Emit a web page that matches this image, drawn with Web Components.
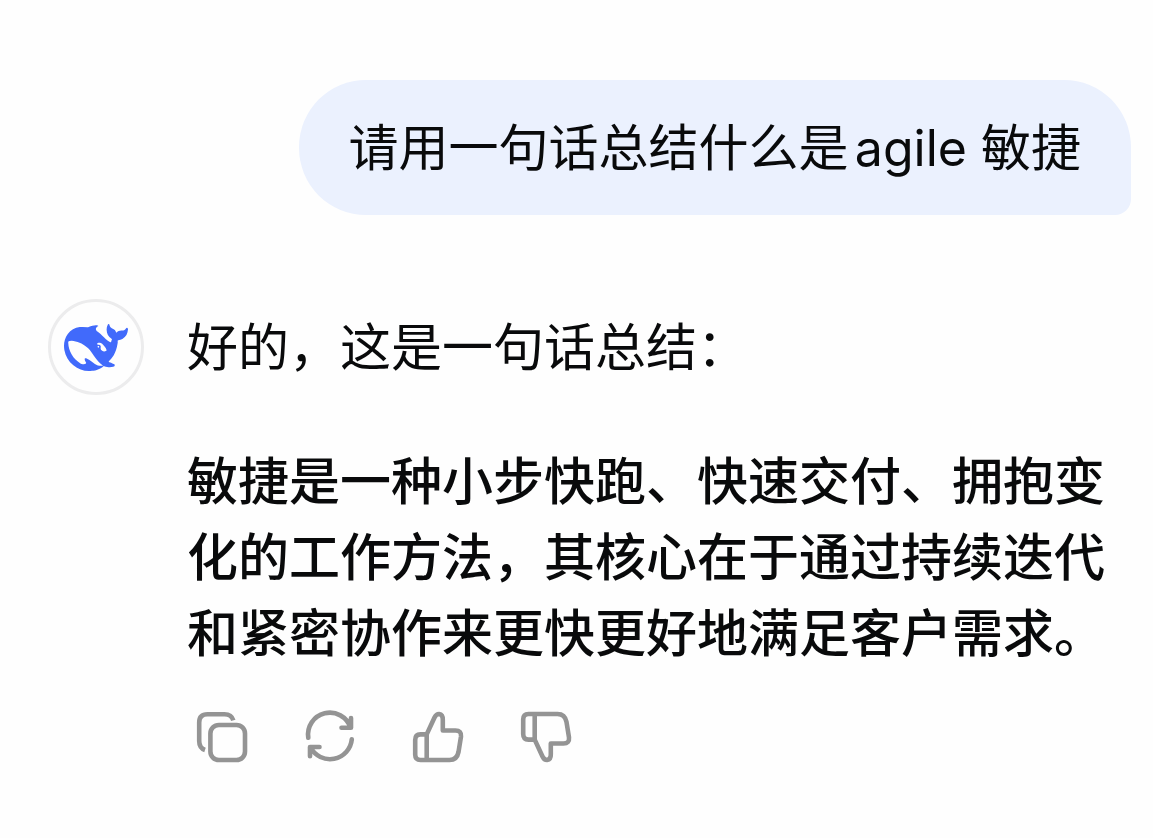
<!DOCTYPE html>
<html lang="zh-CN">
<head>
<meta charset="utf-8">
<meta name="viewport" content="width=device-width, initial-scale=1">
<title>敏捷</title>
<style>
  body {
    margin: 0;
    background-color: #fefefe;
    color: #090a0b;
    font-family: Inter, "Noto Sans CJK SC", sans-serif;
  }
</style>
</head>
<body>
<chat-thread>
  <user-message>请用一句话总结什么是agile 敏捷</user-message>
  <bot-message>
    <p>好的，这是一句话总结：</p>
    <p><strong>敏捷是一种小步快跑、快速交付、拥抱变化的工作方法，其核心在于通过持续迭代和紧密协作来更快更好地满足客户需求。</strong></p>
    <message-actions slot="actions"></message-actions>
  </bot-message>
</chat-thread>

<script>
class ChatThread extends HTMLElement {
  constructor() {
    super();
    this.attachShadow({ mode: 'open' }).innerHTML = `
      <style>
        :host {
          display: flex;
          flex-direction: column;
          gap: 84px;
          padding: 80px 22px 48px 48px;
          box-sizing: border-box;
        }
      </style>
      <slot></slot>
    `;
  }
}

class UserMessage extends HTMLElement {
  constructor() {
    super();
    this.attachShadow({ mode: 'open' }).innerHTML = `
      <style>
        :host {
          display: block;
          align-self: flex-end;
          padding: 30px 50px 29px;
          border-radius: 67px 67px 16px 67px;
          background-color: #ebf1fe;
          font-size: 50px;
          line-height: 76px;
          text-autospace: normal;
        }
      </style>
      <slot></slot>
    `;
  }
}

class BotAvatar extends HTMLElement {
  constructor() {
    super();
    this.attachShadow({ mode: 'open' }).innerHTML = `
      <style>
        :host {
          display: flex;
          flex: none;
          align-items: center;
          justify-content: center;
          width: 96px;
          height: 96px;
          padding-top: 2px;
          border: 3px solid #ececed;
          border-radius: 50%;
          box-sizing: border-box;
        }

        svg {
          width: 64px;
          height: 64px;
          fill: #416afb;
        }
      </style>
      <svg viewBox="0 0 24 24" aria-hidden="true">
        <path d="M23.748 4.482c-.254-.124-.364.113-.512.234-.051.039-.094.09-.137.136-.372.397-.806.657-1.373.626-.829-.046-1.537.214-2.163.848-.133-.782-.575-1.248-1.247-1.548-.352-.156-.708-.311-.955-.65-.172-.241-.219-.51-.305-.774-.055-.16-.11-.323-.293-.35-.2-.031-.278.136-.356.276-.313.572-.434 1.202-.422 1.84.027 1.436.633 2.58 1.838 3.393.137.093.172.187.129.323-.082.28-.18.552-.266.833-.055.179-.137.217-.329.14a5.526 5.526 0 0 1-1.736-1.18c-.857-.828-1.631-1.742-2.597-2.458a11.365 11.365 0 0 0-.689-.471c-.985-.957.13-1.743.388-1.836.27-.098.093-.432-.779-.428-.872.004-1.67.295-2.687.684a3.055 3.055 0 0 1-.465.137 9.597 9.597 0 0 0-2.883-.102c-1.885.21-3.39 1.102-4.497 2.623C.082 8.606-.231 10.684.152 12.85c.403 2.284 1.569 4.175 3.36 5.653 1.858 1.533 3.997 2.284 6.438 2.14 1.482-.085 3.133-.284 4.994-1.86.47.234.962.327 1.78.397.63.059 1.236-.03 1.705-.128.735-.156.684-.837.419-.961-2.155-1.004-1.682-.595-2.113-.926 1.096-1.296 2.746-2.642 3.392-7.003.05-.347.007-.565 0-.845-.004-.17.035-.237.23-.256a4.173 4.173 0 0 0 1.545-.475c1.396-.763 1.96-2.015 2.093-3.517.02-.23-.004-.467-.247-.588zM11.581 18c-2.089-1.642-3.102-2.183-3.52-2.16-.392.024-.321.471-.235.763.09.288.207.486.371.739.114.167.192.416-.113.603-.673.416-1.842-.14-1.897-.167-1.361-.802-2.5-1.86-3.301-3.307-.774-1.393-1.224-2.887-1.298-4.482-.02-.386.093-.522.477-.592a4.696 4.696 0 0 1 1.529-.039c2.132.312 3.946 1.265 5.468 2.774.868.86 1.525 1.887 2.202 2.891.72 1.066 1.494 2.082 2.48 2.914.348.292.625.514.891.677-.802.09-2.14.11-3.054-.614zm1-6.44a.306.306 0 0 1 .415-.287.302.302 0 0 1 .2.288.306.306 0 0 1-.31.307.303.303 0 0 1-.304-.308zm3.11 1.596c-.2.081-.399.151-.59.16a1.245 1.245 0 0 1-.798-.254c-.274-.23-.47-.358-.552-.758a1.73 1.73 0 0 1 .016-.588c.07-.327-.008-.537-.239-.727-.187-.156-.426-.199-.688-.199a.559.559 0 0 1-.254-.078.253.253 0 0 1-.114-.358c.028-.054.16-.186.192-.21.356-.202.767-.136 1.146.016.352.144.618.408 1.001.782.391.451.462.576.685.914.176.265.336.537.445.848.067.195-.019.354-.25.452z"/>
      </svg>
    `;
  }
}

class BotMessage extends HTMLElement {
  constructor() {
    super();
    this.attachShadow({ mode: 'open' }).innerHTML = `
      <style>
        :host {
          display: flex;
          align-items: flex-start;
          gap: 43px;
          font-size: 51px;
          line-height: 76px;
        }

        .body {
          flex: 1;
          min-width: 0;
          padding-top: 11px;
        }

        .text {
          display: flex;
          flex-direction: column;
          gap: 58px;
          margin-bottom: 30px;
        }

        ::slotted(p) {
          margin: 0;
        }
      </style>
      <bot-avatar></bot-avatar>
      <div class="body">
        <div class="text"><slot></slot></div>
        <slot name="actions"></slot>
      </div>
    `;
  }

  connectedCallback() {
    this.querySelectorAll('strong').forEach((el) => {
      el.style.fontWeight = '500';
    });
  }
}

const thumb = 'M23.7 58V32.4L31.5 15.5Q33.2 12 36 12Q40 12.6 39.8 18V28.5H52.5Q58.6 28.5 58 34.5L55.5 50Q54 58 46.5 58H17.5Q12.2 58 12.2 52.5V38Q12.2 32.4 17.5 32.4H23.7';

const actions = [
  {
    label: '复制',
    icon: '<rect x="23.4" y="23" width="34.6" height="35" rx="8.5"/><path stroke-linecap="butt" d="M46.3 18.4Q44.5 12.3 37.5 12.3H20.5Q12.2 12.3 12.2 20.5V39Q12.2 46 18 48"/>',
  },
  {
    label: '重新生成',
    icon: '<path d="M13.3 35.8A21.8 21.8 0 0 1 55.5 25.5M56 16V25.7H46.5M56.8 37.3A21.9 21.9 0 0 1 15.5 45.3M24.5 45H15V54.2"/>',
  },
  { label: '喜欢', icon: `<path d="${thumb}"/>` },
  { label: '不喜欢', icon: `<path transform="matrix(1 0 0 -1 0 70)" d="${thumb}"/>` },
];

class MessageActions extends HTMLElement {
  constructor() {
    super();
    this.attachShadow({ mode: 'open' });
  }

  connectedCallback() {
    this.render();
  }

  render() {
    this.shadowRoot.innerHTML = `
      <style>
        :host {
          display: flex;
          flex-wrap: wrap;
          gap: 38px;
        }

        button {
          display: block;
          padding: 0;
          border: 0;
          border-radius: 16px;
          background: none;
          color: #949494;
          cursor: pointer;
        }

        svg {
          display: block;
          width: 70px;
          height: 70px;
          fill: none;
          stroke: currentColor;
          stroke-width: 4.6;
          stroke-linecap: round;
          stroke-linejoin: round;
        }
      </style>
      ${actions.map(({ label, icon }) => `
        <button type="button" aria-label="${label}">
          <svg viewBox="0 0 70 70" aria-hidden="true">${icon}</svg>
        </button>
      `).join('')}
    `;
  }
}

customElements.define('chat-thread', ChatThread);
customElements.define('user-message', UserMessage);
customElements.define('bot-avatar', BotAvatar);
customElements.define('bot-message', BotMessage);
customElements.define('message-actions', MessageActions);
</script>
</body>
</html>
